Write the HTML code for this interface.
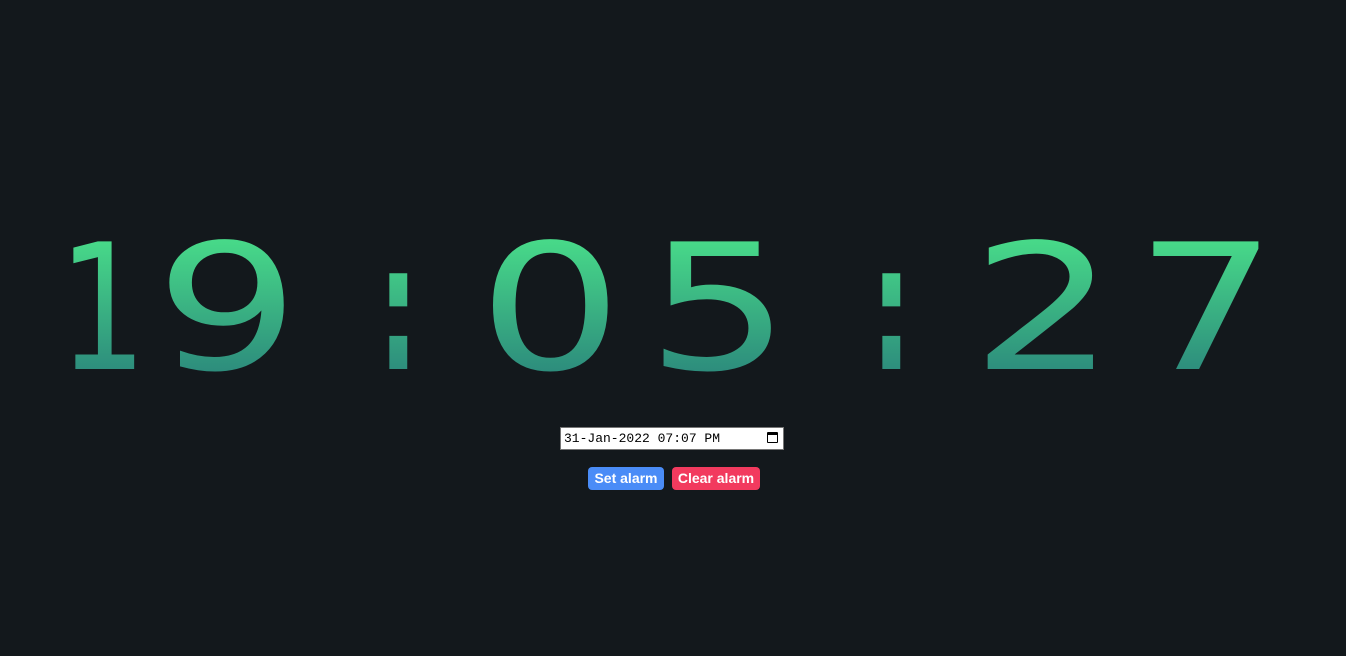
<!DOCTYPE html>
<html><head><style>
html,body{margin:0;padding:0;width:1346px;height:656px;background:#13181c;overflow:hidden}
.c{position:absolute;top:222px;height:175px;font-family:"DejaVu Sans",sans-serif;font-size:175px;line-height:175px;
background:linear-gradient(180deg,#4ae08a 0%,#4ae08a 4%,#2c8a7c 88%,#2c8a7c 100%);-webkit-background-clip:text;background-clip:text;color:transparent;transform-origin:0 0}
.k{font-weight:bold}
.inp{position:absolute;left:560px;top:427px;width:222px;height:21px;background:#fff;border:1px solid #767676;font-family:"Liberation Mono",monospace;font-size:13px;line-height:21px;color:#000;box-sizing:content-box}
.inp span{position:absolute;left:3px}
.cal{position:absolute;right:5px;top:4px;width:11px;height:11px;border:1.5px solid #000;border-top-width:3px;box-sizing:border-box;border-radius:1px}
.b{position:absolute;top:467px;height:23px;border-radius:4px;color:#fff;font-family:"Liberation Sans",sans-serif;font-weight:bold;font-size:14px;line-height:23px;text-align:center}
</style></head><body>
<div class="c" style="left:58px;transform:scaleX(0.8)">1</div>
<div class="c" style="left:155px;transform:scaleX(1.3)">9</div>
<div class="c k" style="left:378px;transform:scaleX(0.58)">:</div>
<div class="c" style="left:478px;transform:scaleX(1.3)">0</div>
<div class="c" style="left:646px;transform:scaleX(1.3)">5</div>
<div class="c k" style="left:871px;transform:scaleX(0.58)">:</div>
<div class="c" style="left:971px;transform:scaleX(1.3)">2</div>
<div class="c" style="left:1135px;transform:scaleX(1.28)">7</div>
<div class="inp"><span>31-Jan-2022 07:07 PM</span><div class="cal"></div></div>
<div class="b" style="left:588px;width:76px;background:#4a8cf7">Set alarm</div>
<div class="b" style="left:672px;width:88px;background:#f23a5e">Clear alarm</div>
</body></html>
